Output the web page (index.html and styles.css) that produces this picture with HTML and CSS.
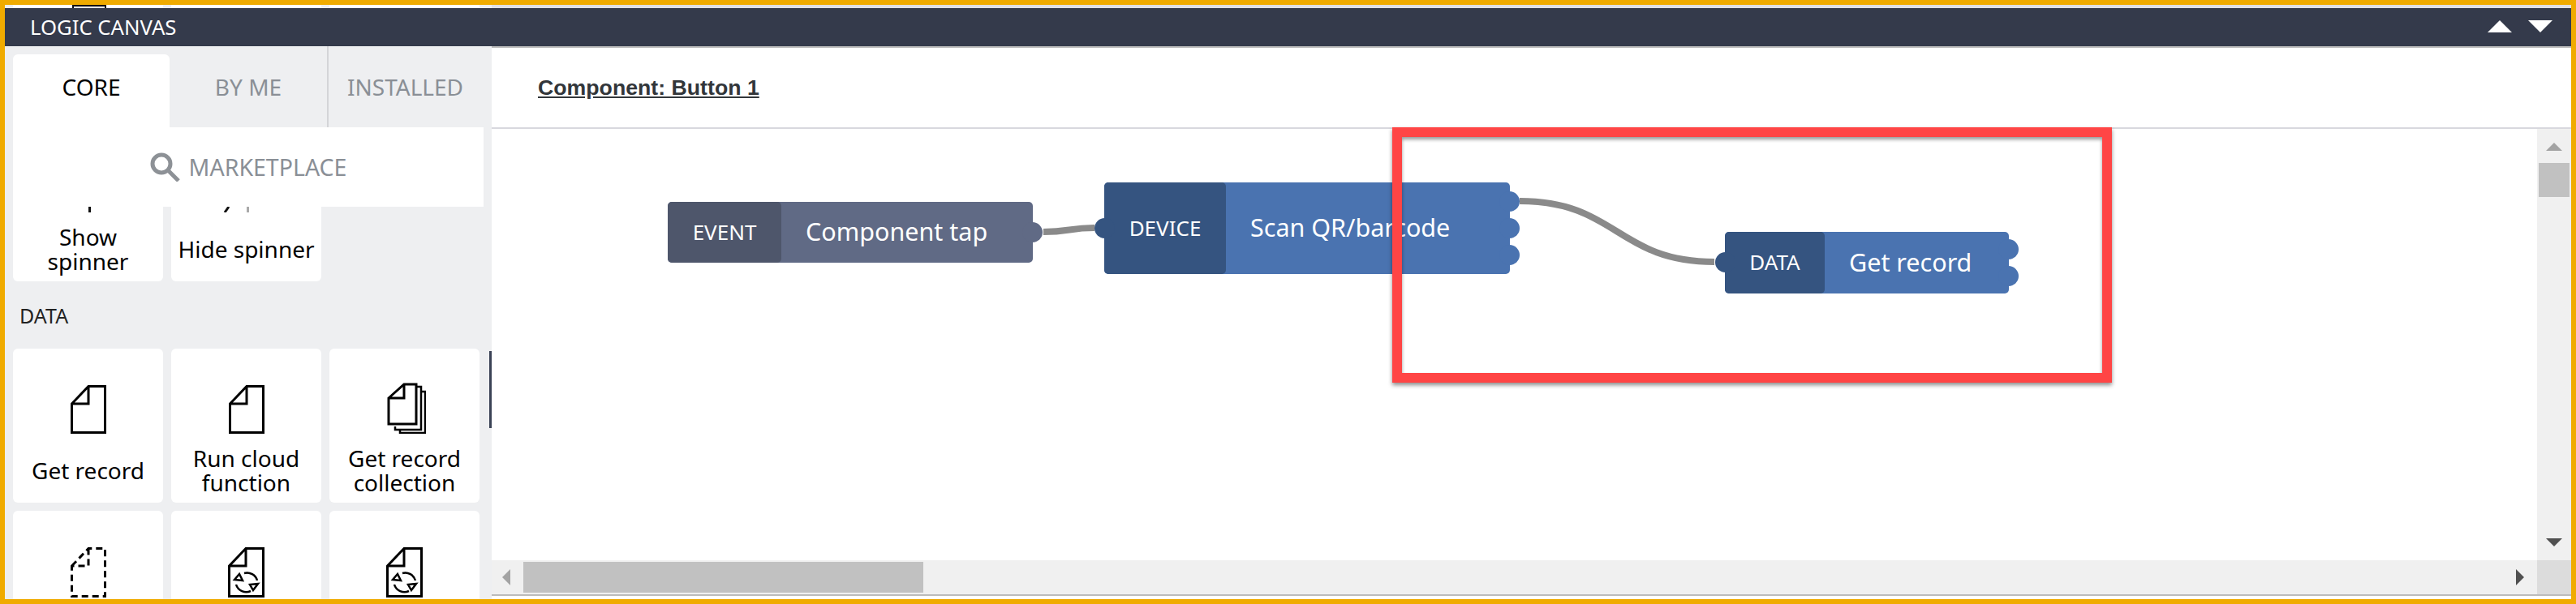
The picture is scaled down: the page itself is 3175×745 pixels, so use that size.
FILE: index.html
```html
<!DOCTYPE html>
<html>
	<head>
		<meta charset="UTF-8">
		<title>Logic canvas</title>
		<link rel="stylesheet" href="styles.css">
	</head>
	<body>
		<div class="frame">
			<div class="strip">
				<div class="strip-cards">
					<div class="strip-card"><span class="strip-icon"></span></div>
					<div class="strip-card"></div>
					<div class="strip-card"></div>
				</div>
			</div>
			<div class="title-bar">
				<span class="title">LOGIC CANVAS</span>
				<span class="title-arrows">
					<span class="tri tri-up-white"></span>
					<span class="tri tri-down-white"></span>
				</span>
			</div>
			<div class="main">
				<div class="side">
					<div class="tabs">
						<div class="tab tab-on">CORE</div>
						<div class="tab tab-mid">BY ME</div>
						<div class="tab tab-last">INSTALLED</div>
					</div>
					<div class="market">
						<svg class="search" width="37" height="36" viewBox="0 0 37 36">
							<circle cx="14" cy="14" r="11" fill="none" stroke="#8d9196" stroke-width="5"/>
							<path d="M22 22L35 35" stroke="#8d9196" stroke-width="5" fill="none"/>
						</svg>
						<span>MARKETPLACE</span>
					</div>
					<div class="cards">
						<div class="card card-cut">
							<svg class="stub" width="80" height="7" viewBox="0 0 80 7"><path d="M41.500 0V7" stroke="#111" stroke-width="3"/></svg>
							<div class="label">Show spinner</div>
						</div>
						<div class="card card-cut">
							<svg class="stub" width="80" height="7" viewBox="0 0 80 7"><path d="M18 0L13 7" stroke="#111" stroke-width="3"/><path d="M41.500 0V7" stroke="#aaa" stroke-width="3"/></svg>
							<div class="label">Hide spinner</div>
						</div>
					</div>
					<div class="group">DATA</div>
					<div class="cards">
						<div class="card">
							<svg class="icon" width="44" height="60" viewBox="0 0 44 60">
								<path d="M1.500 23L22 1.500H42.500V58.500H1.500Z M22 1.500V23H1.500" fill="none" stroke="#000" stroke-width="3"/>
							</svg>
							<div class="label">Get record</div>
						</div>
						<div class="card">
							<svg class="icon" width="44" height="60" viewBox="0 0 44 60">
								<path d="M1.500 23L22 1.500H42.500V58.500H1.500Z M22 1.500V23H1.500" fill="none" stroke="#000" stroke-width="3"/>
							</svg>
							<div class="label">Run cloud function</div>
						</div>
						<div class="card">
							<svg class="icon icon-stack" width="48" height="63" viewBox="0 0 48 63">
								<path d="M10 54V58H42V5H37 M16 58V62H47V11H42" fill="none" stroke="#000" stroke-width="2.500"/>
								<path d="M2 19L21 2H36V51H2Z M21 2V19H2" fill="#fff" stroke="#000" stroke-width="3"/>
							</svg>
							<div class="label">Get record collection</div>
						</div>
						<div class="card">
							<svg class="icon" width="44" height="62" viewBox="0 0 44 62">
								<path d="M1.500 23L22 1.500H42.500V60.500H1.500Z M22 1.500V23H1.500" fill="none" stroke="#000" stroke-width="3" stroke-dasharray="8 5"/>
							</svg>
							<div class="label"></div>
						</div>
						<div class="card">
							<svg class="icon" width="45" height="62" viewBox="0 0 45 62">
								<path d="M1.500 23L22 1.500H43.500V60.500H1.500Z M22 1.500V23H1.500" fill="none" stroke="#000" stroke-width="3"/>
								<path d="M20 32A13 13 0 0 1 36 41 M10 46A13 13 0 0 0 28 54" fill="none" stroke="#000" stroke-width="2.500"/>
								<path d="M8 40L14 33L18 41Z M37 45L31 53L27 46Z" fill="#fff" stroke="#000" stroke-width="2.500"/>
							</svg>
							<div class="label"></div>
						</div>
						<div class="card">
							<svg class="icon" width="45" height="62" viewBox="0 0 45 62">
								<path d="M1.500 23L22 1.500H43.500V60.500H1.500Z M22 1.500V23H1.500" fill="none" stroke="#000" stroke-width="3"/>
								<path d="M20 32A13 13 0 0 1 36 41 M10 46A13 13 0 0 0 28 54" fill="none" stroke="#000" stroke-width="2.500"/>
								<path d="M8 40L14 33L18 41Z M37 45L31 53L27 46Z" fill="#fff" stroke="#000" stroke-width="2.500"/>
							</svg>
							<div class="label"></div>
						</div>
					</div>
					<div class="side-thumb"></div>
				</div>
				<div class="stage">
					<div class="stage-head"><a class="crumb">Component: Button 1</a></div>
					<div class="stage-body">
						<div class="canvas">
							<svg class="wires" width="2521" height="532" viewBox="0 0 2521 532">
								<path d="M680 127C712 127 712 122 743 122" fill="none" stroke="#8a8a8a" stroke-width="8"/>
								<path d="M1267 89C1387 89 1387 164 1507 164" fill="none" stroke="#8a8a8a" stroke-width="8"/>
							</svg>
							<div class="node node-event">
								<div class="node-type">EVENT</div>
								<div class="node-name">Component tap</div>
								<span class="port port-out port-a"></span>
							</div>
							<div class="node node-device">
								<div class="node-type">DEVICE</div>
								<div class="node-name">Scan QR/barcode</div>
								<span class="port port-in"></span>
								<span class="port port-out port-b"></span>
								<span class="port port-out port-c"></span>
								<span class="port port-out port-d"></span>
							</div>
							<div class="node node-data">
								<div class="node-type">DATA</div>
								<div class="node-name">Get record</div>
								<span class="port port-in"></span>
								<span class="port port-out port-e"></span>
								<span class="port port-out port-f"></span>
							</div>
							<div class="callout"></div>
						</div>
						<div class="vbar">
							<span class="tri tri-up-grey"></span>
							<div class="vthumb"></div>
							<span class="tri tri-down-dark"></span>
						</div>
						<div class="hbar">
							<span class="tri tri-left-grey"></span>
							<div class="hthumb"></div>
							<span class="tri tri-right-dark"></span>
						</div>
						<div class="corner"></div>
					</div>
					<div class="stage-foot"></div>
				</div>
			</div>
		</div>
	</body>
</html>
```
FILE: styles.css
```css
* {
	box-sizing: border-box;
}
body {
	margin: 0;
	font-family: "Noto Sans", "Liberation Sans", sans-serif;
	background: #fff;
}
.frame {
	width: 3175px;
	height: 745px;
	border: 6px solid #f0ab00;
	display: flex;
	flex-direction: column;
	overflow: hidden;
}

/* sliver of the page behind the panel */
.strip {
	height: 4px;
	background: #e1e1e5;
	overflow: hidden;
}
.strip-cards {
	width: 600px;
	height: 4px;
	background: #eeeff1;
	padding-left: 10px;
	display: grid;
	grid-template-columns: 185px 185px 185px;
	column-gap: 10px;
}
.strip-card {
	background: #fff;
}
.strip-icon {
	display: block;
	width: 42px;
	height: 4px;
	margin-left: 73px;
	border: 2px solid #111;
	border-bottom: 0;
	background: #e6e6e6;
}

.title-bar {
	height: 47px;
	background: #343a4b;
	color: #fff;
	display: flex;
	align-items: center;
	justify-content: space-between;
	padding-left: 31px;
	padding-right: 23px;
}
.title {
	font-size: 25.700px;
}
.title-arrows {
	display: flex;
	gap: 20px;
	margin-top: -2px;
}

.tri {
	display: block;
	width: 0;
	height: 0;
}
.tri-up-white {
	border-left: 15px solid transparent;
	border-right: 15px solid transparent;
	border-bottom: 15px solid #fff;
}
.tri-down-white {
	border-left: 15px solid transparent;
	border-right: 15px solid transparent;
	border-top: 15px solid #fff;
}
.tri-up-grey {
	border-left: 10px solid transparent;
	border-right: 10px solid transparent;
	border-bottom: 10px solid #a3a3a3;
}
.tri-down-dark {
	border-left: 10px solid transparent;
	border-right: 10px solid transparent;
	border-top: 10px solid #505050;
}
.tri-left-grey {
	border-top: 10px solid transparent;
	border-bottom: 10px solid transparent;
	border-right: 10px solid #a3a3a3;
}
.tri-right-dark {
	border-top: 10px solid transparent;
	border-bottom: 10px solid transparent;
	border-left: 10px solid #505050;
}

.main {
	flex: 1;
	display: flex;
	min-height: 0;
}

/* left palette */
.side {
	position: relative;
	width: 600px;
	flex: none;
	background: #eeeff1;
	overflow: hidden;
}
.tabs {
	height: 100px;
	display: flex;
	padding-left: 10px;
	font-size: 28px;
	color: #8a8f96;
}
.tab {
	display: flex;
	justify-content: center;
	padding-top: 31px;
}
.tab-on {
	width: 193px;
	margin-top: 10px;
	padding-top: 21px;
	background: #fff;
	color: #000;
	border-radius: 6px 6px 0 0;
}
.tab-mid {
	width: 196px;
	border-right: 2px solid #d4d5d8;
}
.tab-last {
	flex: 1;
	padding-right: 12px;
}
.market {
	width: 580px;
	height: 98px;
	margin-left: 10px;
	background: #fff;
	display: flex;
	align-items: center;
	justify-content: center;
	gap: 11px;
	font-size: 28.500px;
	color: #8a8f96;
}
.cards {
	display: grid;
	grid-template-columns: 185px 185px 185px;
	gap: 10px;
	padding-left: 10px;
}
.card {
	height: 190px;
	background: #fff;
	border-radius: 6px;
	display: flex;
	flex-direction: column;
	align-items: center;
	padding-top: 45px;
	color: #000;
}
.card-cut {
	height: 92px;
	padding-top: 0;
	border-radius: 0 0 6px 6px;
}
.stub {
	flex: none;
	margin-bottom: 15px;
}
.icon {
	flex: none;
	margin-bottom: 15px;
}
.icon-stack {
	margin-top: -3px;
	margin-left: 5px;
}
.label {
	height: 60px;
	display: flex;
	align-items: center;
	text-align: center;
	font-size: 28px;
	line-height: 30px;
	padding: 0 8px;
}
.group {
	height: 83px;
	padding: 25px 0 0 18px;
	font-size: 25px;
	color: #222;
}
.side-thumb {
	position: absolute;
	right: 0;
	top: 376px;
	width: 3px;
	height: 95px;
	background: #3a4255;
}

/* right side */
.stage {
	flex: 1;
	min-width: 0;
	display: flex;
	flex-direction: column;
}
.stage-head {
	height: 102px;
	border-top: 2px solid #bbb;
	border-bottom: 2px solid #d8d8de;
	padding: 34px 0 0 57px;
}
.crumb {
	font-size: 26.700px;
	font-family: "Liberation Sans", sans-serif;
	font-weight: 700;
	color: #32363a;
	text-decoration: underline;
}
.stage-body {
	display: grid;
	grid-template-columns: 2521px 42px;
	grid-template-rows: 532px 42px;
}
.canvas {
	position: relative;
}
.wires {
	position: absolute;
	left: 0;
	top: 0;
}
.vbar {
	background: #f0f0f0;
	display: flex;
	flex-direction: column;
	align-items: center;
	padding-top: 17px;
}
.vthumb {
	width: 38px;
	height: 42px;
	margin-top: 15px;
	background: #c1c1c1;
}
.vbar .tri-down-dark {
	margin-top: auto;
	margin-bottom: 17px;
}
.hbar {
	background: #f0f0f0;
	display: flex;
	align-items: center;
	padding: 0 16px 0 13px;
}
.hthumb {
	width: 493px;
	height: 38px;
	margin-left: 16px;
	background: #c1c1c1;
}
.hbar .tri-right-dark {
	margin-left: auto;
}
.corner {
	background: #dcdcdc;
}
.stage-foot {
	height: 2px;
	background: #bbb;
}

/* nodes on the logic canvas */
.node {
	position: absolute;
	display: flex;
	align-items: center;
	color: #fff;
	border-radius: 5px;
	background: #4a73b0;
}
.node-type {
	align-self: stretch;
	display: flex;
	align-items: center;
	justify-content: center;
	padding-bottom: 2px;
	border-radius: 5px;
	background: #355480;
	font-size: 26px;
}
.node-name {
	padding-left: 30px;
	padding-bottom: 3px;
	font-size: 30.500px;
	white-space: nowrap;
}
.node-event {
	left: 217px;
	top: 90px;
	width: 450px;
	height: 75px;
	background: #606a85;
}
.node-event .node-type {
	width: 140px;
	background: #4e566b;
}
.node-event .port {
	background: #606a85;
}
.node-device {
	left: 755px;
	top: 66px;
	width: 500px;
	height: 113px;
}
.node-device .node-type {
	width: 150px;
}
.node-data {
	left: 1520px;
	top: 127px;
	width: 350px;
	height: 76px;
}
.node-data .node-type {
	width: 123px;
}
.port {
	position: absolute;
	width: 25px;
	height: 25px;
	border-radius: 50%;
	background: #4a73b0;
}
.port-in {
	left: -12px;
	top: 44px;
	background: #355480;
}
.node-data .port-in {
	top: 25px;
}
.port-out {
	right: -12px;
}
.port-a {
	top: 25px;
}
.port-b {
	top: 11px;
}
.port-c {
	top: 44px;
}
.port-d {
	top: 77px;
}
.port-e {
	top: 9px;
}
.port-f {
	top: 42px;
}
.callout {
	position: absolute;
	left: 1110px;
	top: -2px;
	width: 887px;
	height: 315px;
	border: 12px solid #ff4545;
	box-shadow: 0 3px 5px rgba(0, 0, 0, 0.45), inset 0 3px 4px rgba(0, 0, 0, 0.4);
}
```
